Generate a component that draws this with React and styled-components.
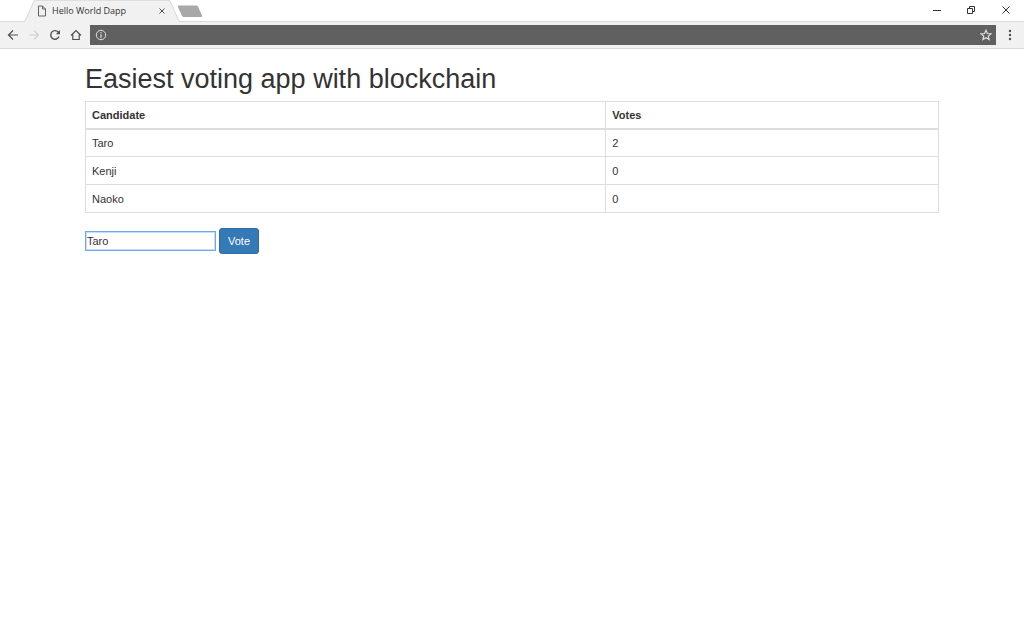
import React, { Component } from 'react';
import styled, { createGlobalStyle } from 'styled-components';

const GlobalStyle = createGlobalStyle`
  * {
    box-sizing: border-box;
  }
  body {
    margin: 0;
    background-color: white;
    color: #333;
    font-family: "Liberation Sans", Arial, sans-serif;
    font-size: 11px;
    line-height: 16px;
  }
`;

const TabStrip = styled.div`
  display: flex;
  align-items: flex-start;
  height: 22px;
  background-color: white;
  box-shadow: inset 0 -1px #dadada;
`;

const BrowserTab = styled.div`
  position: relative;
  display: flex;
  align-items: center;
  width: 156px;
  height: 22px;
  margin-left: 24px;
  padding: 0 9px 0 13px;
  color: #333;
  font-family: "Open Sans", sans-serif;
  font-size: 9px;
`;

const TabShape = styled.svg`
  position: absolute;
  top: 0;
  left: 0;
`;

const PageIcon = styled.svg`
  position: relative;
`;

const TabTitle = styled.span`
  position: relative;
  flex: 1;
  margin-left: 5px;
  white-space: nowrap;
`;

const IconButton = styled.button`
  position: relative;
  display: flex;
  align-items: center;
  justify-content: center;
  width: ${props => props.$width || 21}px;
  height: 20px;
  padding: 0;
  border: 0;
  background: none;
  color: ${props => props.$color || '#505050'};
`;

const NewTab = styled(IconButton)`
  margin-left: -4px;
`;

const WindowButtons = styled.div`
  display: flex;
  margin-left: auto;
`;

const Toolbar = styled.div`
  display: flex;
  align-items: center;
  height: 27px;
  padding: 0 3px 0 2px;
  background-color: #f1f1f1;
  border-bottom: 1px solid #dadada;
`;

const AddressBar = styled.div`
  display: flex;
  flex: 1;
  align-items: center;
  height: 20px;
  margin-left: 4px;
  background-color: #606060;
`;

const AddressInput = styled.input`
  flex: 1;
  min-width: 0;
  height: 20px;
  padding: 0;
  border: 0;
  outline: 0;
  background: none;
  color: white;
  font-size: 11px;
`;

const Container = styled.main`
  width: 83.4%;
  margin: 0 auto;
`;

const Title = styled.h1`
  margin: 0;
  padding: 14px 0 6px;
  font-size: 27px;
  font-weight: 400;
  line-height: 32px;
`;

const Table = styled.table`
  width: 100%;
  margin-bottom: 15px;
  border: 1px solid #ddd;
  border-collapse: collapse;
`;

const Cell = styled.td`
  height: 28px;
  padding: 0 6px;
  border: 1px solid #ddd;
  text-align: left;
`;

const HeadCell = styled(Cell)`
  width: ${props => props.$width || 'auto'};
  height: 27px;
  border-bottom-width: 2px;
  font-weight: 700;
`;

const VoteForm = styled.form`
  display: flex;
  align-items: center;
  gap: 3px;
`;

const CandidateInput = styled.input`
  width: 131px;
  height: 20px;
  margin-bottom: 1px;
  padding: 0 1px;
  border: 1px solid #6ea6f3;
  outline: 1px solid #c8ddfb;
  outline-offset: -2px;
  color: #333;
  font-family: inherit;
  font-size: 11px;
`;

const VoteButton = styled.button`
  height: 26px;
  padding: 0 8px;
  border: 1px solid #2e6da4;
  border-radius: 3px;
  background-color: #337ab7;
  color: white;
  font-family: inherit;
  font-size: 11px;
`;

const Icon = ({ size = 12, children }) => (
  <svg width={size} height={size} viewBox="0 0 12 12" fill="none" stroke="currentColor" strokeWidth="1.2" aria-hidden="true">
    {children}
  </svg>
);

const candidates = [
  { name: 'Taro', votes: 2 },
  { name: 'Kenji', votes: 0 },
  { name: 'Naoko', votes: 0 },
];

class Browser extends Component {
  render() {
    return (
      <header>
        <TabStrip>
          <BrowserTab>
            <TabShape width="156" height="22" viewBox="0 0 156 22">
              <path d="M0 22 L1 21 L10 1 Q10.5 0 12 0 H144 Q145.5 0 146 1 L155 21 L156 22Z" fill="#f1f1f1" />
              <path d="M0 21.5 L1 21 L10 1 Q10.5 0.2 12 0.2 H144 Q145.5 0.2 146 1 L155 21 L156 21.5" fill="none" stroke="#d0d0d0" strokeWidth="0.8" />
            </TabShape>
            <PageIcon width="10" height="12" viewBox="0 0 10 12" fill="none" stroke="#606060" aria-hidden="true">
              <path d="M1.5 1 H5.5 L8.5 4 V11 H1.5Z M5.5 1 V4 H8.5" />
            </PageIcon>
            <TabTitle>Hello World Dapp</TabTitle>
            <IconButton $width={18} aria-label="Close tab">
              <Icon><path d="M3.5 3.5 L8.5 8.5 M8.5 3.5 L3.5 8.5" strokeWidth="1" /></Icon>
            </IconButton>
          </BrowserTab>
          <NewTab $width={27} aria-label="New tab">
            <svg width="27" height="20" viewBox="0 0 27 20" aria-hidden="true">
              <path d="M2.5 5.5 H20.5 Q21.5 5.5 22 6.5 L26 15.5 Q26.5 17 25 17 H8 Q6.5 17 6 16 L2 7 Q1.5 5.5 2.5 5.5Z" fill="#a8a8a8" />
            </svg>
          </NewTab>
          <WindowButtons>
            <IconButton $width={34} $color="#333" aria-label="Minimize">
              <Icon><path d="M2 6.5 H10" strokeWidth="1" /></Icon>
            </IconButton>
            <IconButton $width={34} $color="#333" aria-label="Restore">
              <Icon><path d="M2.5 4.5 H7.5 V9.5 H2.5Z M4.5 4.5 V2.5 H9.5 V7.5 H7.5" strokeWidth="1" /></Icon>
            </IconButton>
            <IconButton $width={36} $color="#333" aria-label="Close">
              <Icon><path d="M2.5 2.5 L9.5 9.5 M9.5 2.5 L2.5 9.5" strokeWidth="1" /></Icon>
            </IconButton>
          </WindowButtons>
        </TabStrip>
        <Toolbar>
          <IconButton aria-label="Back">
            <Icon><path d="M11 6 H1.5 M6 1.5 L1.5 6 L6 10.5" /></Icon>
          </IconButton>
          <IconButton $color="#d0d0d0" aria-label="Forward">
            <Icon><path d="M1 6 H10.5 M6 1.5 L10.5 6 L6 10.5" /></Icon>
          </IconButton>
          <IconButton aria-label="Reload">
            <Icon>
              <path d="M10 7.5 A4.3 4.3 0 1 1 9.3 3.1" strokeWidth="1.4" />
              <path d="M11 1 V5.2 H6.8Z" fill="currentColor" stroke="none" />
            </Icon>
          </IconButton>
          <IconButton aria-label="Home">
            <Icon><path d="M1 6.5 L6 1.5 L11 6.5 M2.8 5.5 V10.5 H9.2 V5.5" /></Icon>
          </IconButton>
          <AddressBar>
            <IconButton $color="#e0e0e0" aria-label="Site information">
              <Icon>
                <circle cx="6" cy="6" r="4.7" strokeWidth="1" />
                <path d="M6 5.2 V9 M6 3 V4.2" />
              </Icon>
            </IconButton>
            <AddressInput aria-label="Address" />
            <IconButton $color="#e0e0e0" aria-label="Bookmark">
              <Icon><path d="M6 1.2 L7.4 4.5 L11 4.8 L8.3 7.1 L9.1 10.6 L6 8.7 L2.9 10.6 L3.7 7.1 L1 4.8 L4.6 4.5Z" /></Icon>
            </IconButton>
          </AddressBar>
          <IconButton $width={25} aria-label="Menu">
            <Icon>
              <g fill="currentColor" stroke="none">
                <circle cx="7" cy="2" r="1.2" />
                <circle cx="7" cy="6" r="1.2" />
                <circle cx="7" cy="10" r="1.2" />
              </g>
            </Icon>
          </IconButton>
        </Toolbar>
      </header>
    );
  }
}

class App extends Component {
  state = { candidate: 'Taro', candidates };

  handleChange = (e) => {
    this.setState({ candidate: e.target.value });
  }

  voteForCandidate = (e) => {
    e.preventDefault();
    this.setState(state => ({
      candidates: state.candidates.map(item => (
        item.name === state.candidate ? { ...item, votes: item.votes + 1 } : item
      ))
    }));
  }

  render() {
    return (
      <>
        <GlobalStyle />
        <Browser />
        <Container>
          <Title>Easiest voting app with blockchain</Title>
          <Table>
            <thead>
              <tr>
                <HeadCell as="th" $width="61%">Candidate</HeadCell>
                <HeadCell as="th">Votes</HeadCell>
              </tr>
            </thead>
            <tbody>
              {this.state.candidates.map(item => (
                <tr key={item.name}>
                  <Cell>{item.name}</Cell>
                  <Cell>{item.votes}</Cell>
                </tr>
              ))}
            </tbody>
          </Table>
          <VoteForm onSubmit={this.voteForCandidate}>
            <CandidateInput aria-label="Candidate" value={this.state.candidate} onChange={this.handleChange} />
            <VoteButton type="submit">Vote</VoteButton>
          </VoteForm>
        </Container>
      </>
    );
  }
}

export default App;
